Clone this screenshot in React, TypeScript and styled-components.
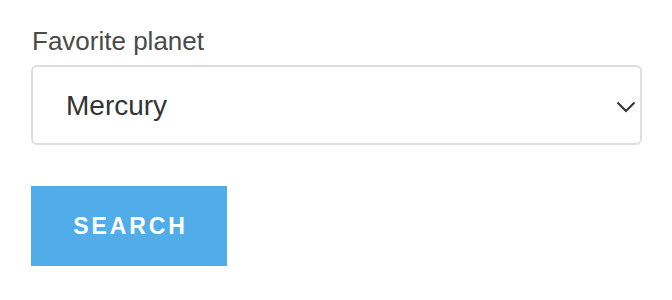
import React, { useState } from 'react';
import styled, { createGlobalStyle } from 'styled-components';

const GlobalStyle = createGlobalStyle`
  html, body {
    margin: 0;
    padding: 0;
    background: #ffffff;
    font-family: 'Liberation Sans', Arial, Helvetica, sans-serif;
  }
`;

const Form = styled.form`
  display: flex;
  flex-direction: column;
  align-items: flex-start;
  padding: 27px 30px 0 31px;
`;

const Label = styled.label`
  display: block;
  font-size: 26px;
  line-height: 29px;
  color: #4a4a4a;
  margin: 0 0 9px 1px;
`;

const SelectWrap = styled.div`
  position: relative;
  width: 611px;
  height: 80px;
`;

const Select = styled.select`
  appearance: none;
  -webkit-appearance: none;
  box-sizing: border-box;
  width: 100%;
  height: 100%;
  margin: 0;
  padding: 0 60px 0 33px;
  border: 2px solid #dddddd;
  border-radius: 6px;
  background: #ffffff;
  font-family: 'Liberation Sans', Arial, Helvetica, sans-serif;
  font-size: 28px;
  color: #333333;
  outline: none;
`;

const Chevron = styled.svg`
  position: absolute;
  right: 6px;
  top: 36px;
  pointer-events: none;
`;

const Button = styled.button`
  margin-top: 41px;
  width: 196px;
  height: 80px;
  border: none;
  border-radius: 0;
  background: #50ade9;
  color: #ffffff;
  font-family: 'Liberation Sans', Arial, Helvetica, sans-serif;
  font-size: 23px;
  font-weight: bold;
  letter-spacing: 2.9px;
  padding: 0 0 0 3px;
  cursor: pointer;
`;

const PLANETS = ['Mercury', 'Venus', 'Earth', 'Mars', 'Jupiter', 'Saturn', 'Uranus', 'Neptune'];

const App = () => {
  const [planet, setPlanet] = useState('Mercury');

  return (
    <>
      <GlobalStyle />
      <Form onSubmit={(e) => e.preventDefault()}>
        <Label htmlFor="planet">Favorite planet</Label>
        <SelectWrap>
          <Select id="planet" value={planet} onChange={(e) => setPlanet(e.target.value)}>
            {PLANETS.map((p) => (
              <option key={p} value={p}>
                {p}
              </option>
            ))}
          </Select>
          <Chevron width="20" height="12" viewBox="0 0 20 12">
            <polyline points="1.5,1.5 10,10 18.5,1.5" fill="none" stroke="#333333" strokeWidth="2" />
          </Chevron>
        </SelectWrap>
        <Button type="submit">SEARCH</Button>
      </Form>
    </>
  );
};

export default App;
